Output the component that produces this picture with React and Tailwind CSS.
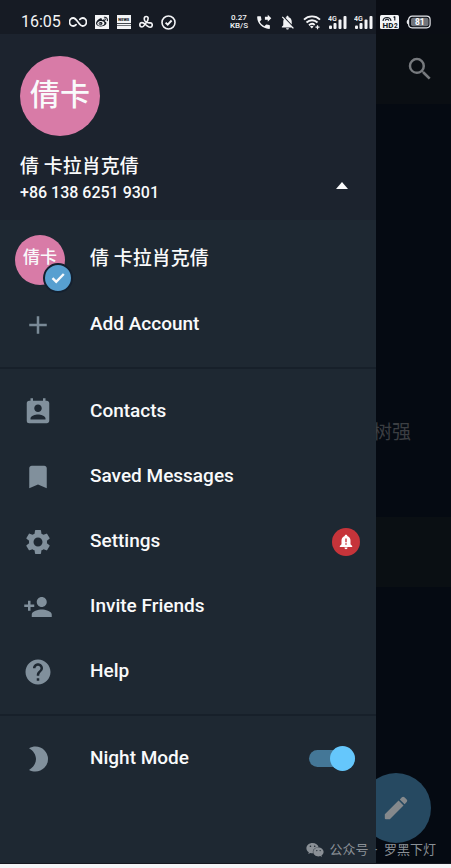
import { useState } from "react";
import {
  MdAdd,
  MdBookmark,
  MdHelp,
  MdNotificationsOff,
  MdPermContactCalendar,
  MdPersonAdd,
  MdPhoneForwarded,
  MdSearch,
  MdSettings,
} from "react-icons/md";
import { FaWeibo, FaWeixin } from "react-icons/fa";

const LINKS = [
  { label: "Contacts", icon: MdPermContactCalendar },
  { label: "Saved Messages", icon: MdBookmark },
  { label: "Settings", icon: MdSettings, alert: true },
  { label: "Invite Friends", icon: MdPersonAdd },
  { label: "Help", icon: MdHelp },
];

function InfinityIcon() {
  return (
    <svg className="h-3 w-[18px]" viewBox="0 0 18 12" fill="none" aria-hidden>
      <path
        d="M11 3.4C12 2.4 13 2 14 2a3.8 3.8 0 0 1 0 8c-4 0-6-8-10-8a3.8 3.8 0 0 0 0 8c1.200 0 2.200-.5 3-1.400"
        transform="translate(.5 0) scale(.94 1)"
        stroke="currentColor"
        strokeWidth="1.800"
        strokeLinecap="round"
      />
    </svg>
  );
}

function NewsIcon() {
  return (
    <span className="flex h-3.5 w-3.5 flex-col items-center bg-gray-100 pt-[3px] text-[#151b24]">
      <span className="text-[4px] leading-[4px] font-black">NEWS</span>
      <span className="mt-px h-px w-full bg-[#151b24]/80" />
      <span className="mt-px h-px w-full bg-[#151b24]/60" />
    </span>
  );
}

function TrefoilIcon() {
  return (
    <svg className="h-3.5 w-3.5" viewBox="0 0 14 14" fill="none" stroke="currentColor" strokeWidth="1.600" aria-hidden>
      <path d="M7.300 7.200C4.500 6 4.600 1.500 7.200 1.500s2.600 3.500 0 6.200C5.500 9.500 5 12 3 12a2.200 2.200 0 0 1 0-4.400c2 0 3 1.500 4.500 2.800 1.200 1 2 1.800 3.500 1.800a2.100 2.100 0 0 0 .2-4.300C9.500 7.800 8.500 8 7.300 7.200z" />
    </svg>
  );
}

function CheckRingIcon() {
  return (
    <svg className="h-[15px] w-[15px]" viewBox="0 0 15 15" fill="none" stroke="currentColor" aria-hidden>
      <circle cx="7.500" cy="7.500" r="6.500" strokeWidth="1.600" />
      <path d="M4.600 7.600l2.100 2.100 3.900-4.200" strokeWidth="1.900" />
    </svg>
  );
}

function WifiIcon() {
  return (
    <svg className="h-4 w-[18px]" viewBox="0 0 18 16" fill="none" stroke="currentColor" strokeWidth="1.900" aria-hidden>
      <path d="M1 5.600c4.500-4.300 11.500-4.300 16 0" />
      <path d="M3.500 8.500c3.200-3 7.800-3 11 0" />
      <path d="M6 11.200c1.800-1.600 4-1.700 5.700-.2" />
      <path d="M7 12.400a2.800 2.800 0 0 1 3.600 0L8.800 14.600z" fill="currentColor" stroke="none" />
      <path d="M12.500 13.200h4M14.500 11.200v4" strokeWidth="1.200" />
    </svg>
  );
}

function SignalIcon() {
  return (
    <svg className="h-[15px] w-[19px]" viewBox="0 0 19 15" fill="currentColor" aria-hidden>
      <text x="0" y="6" fontSize="7" fontWeight="600">4G</text>
      <rect x="1" y="10.500" width="3" height="3.500" rx="1" />
      <rect x="5.500" y="8" width="3" height="6" rx="1" />
      <rect x="10.500" y="4.500" width="3" height="9.500" rx="1" />
      <rect x="15.500" y="1" width="3" height="13" rx="1" />
    </svg>
  );
}

function HdIcon() {
  return (
    <svg className="h-[14px] w-[19px]" viewBox="0 0 19 14" aria-hidden>
      <rect width="19" height="14" rx="1.500" fill="#f3f4f6" />
      <path d="M3 6C3.500 1.300 10.500 1.300 11 6M5.300 5.600c.5-2 3-2 3.500 0M14.800 1.500v4M13.600 2.500l1.200-1" stroke="#151b24" strokeWidth="1.200" fill="none" />
      <text x="2.500" y="12.800" fontSize="8" fontWeight="800" fill="#151b24">HD</text>
      <text x="14" y="12.800" fontSize="6.500" fontWeight="800" fill="#151b24">2</text>
    </svg>
  );
}

function BatteryIcon() {
  return (
    <svg className="h-[14px] w-[25px]" viewBox="0 0 25 14" aria-hidden>
      <path d="M2.200 4.600C.2 5.200.2 8.800 2.200 9.400z" fill="#e5e7eb" />
      <rect x="2.600" y="1.200" width="21.500" height="11.600" rx="3.500" fill="none" stroke="#e5e7eb" strokeWidth="1.200" />
      <rect x="5" y="2.800" width="17.500" height="8.400" rx="2" fill="#70747b" />
      <text x="13.800" y="10" fontSize="8.500" fontWeight="700" textAnchor="middle" fill="#fff">81</text>
    </svg>
  );
}

function MoonIcon({ className }) {
  return (
    <svg className={className} viewBox="0 0 24 24" fill="currentColor" aria-hidden>
      <path d="M4.800 3.300C6.500 2.400 8.200 2 10 2a10 10 0 0 1 0 20c-1.800 0-3.500-.4-5.200-1.300C8.200 18.700 10.400 15.600 10.400 12S8.200 5.300 4.800 3.300z" />
    </svg>
  );
}

function PencilIcon() {
  return (
    <svg className="h-6 w-6" viewBox="0 0 24 24" fill="currentColor" aria-hidden>
      <path d="M.8 18.200L14.600 4.600l4.900 4.900L5.800 23.200H1.800a1 1 0 0 1-1-1z" />
      <path d="M15.800 3.400L17.900 1.300a1.800 1.800 0 0 1 2.500 0l2.300 2.300a1.800 1.800 0 0 1 0 2.500l-2.100 2.200z" />
    </svg>
  );
}

function AlertBadge() {
  return (
    <span className="ml-auto flex h-7 w-7 items-center justify-center rounded-full bg-[#c6343a]">
      <svg className="h-4 w-4" viewBox="0 0 16 16" fill="#fff" aria-hidden>
        <path d="M8 .8c.8 0 1.300.5 1.300 1.200 2 .6 3.200 2.300 3.200 4.500v3.700l1.700 1.700v1H1.800v-1l1.700-1.700V6.500c0-2.200 1.200-3.900 3.200-4.500C6.700 1.300 7.200.8 8 .8zM6.500 13.600h3c0 1-.6 1.600-1.500 1.600s-1.500-.6-1.500-1.600z" />
        <path d="M7.300 4.500h1.400v3.800H7.300zM7.300 9.300h1.400v1.400H7.300z" fill="#c6343a" />
      </svg>
    </span>
  );
}

function StatusBar() {
  return (
    <header className="flex h-[34px] items-center justify-between bg-[linear-gradient(to_right,#161b24_83.33%,#0a0d14_83.33%)] pt-2.5 pr-5 pl-[21px] text-gray-100">
      <div className="flex items-center gap-2">
        <span className="text-base leading-4">16:05</span>
        <InfinityIcon />
        <span className="flex h-3.5 w-3.5 items-center justify-center bg-gray-100 text-[#151b24]">
          <FaWeibo size={12} />
        </span>
        <NewsIcon />
        <TrefoilIcon />
        <CheckRingIcon />
      </div>
      <div className="flex items-center gap-[7px]">
        <div className="text-center text-[8px] leading-[8px] font-medium">
          <p>0.27</p>
          <p>KB/S</p>
        </div>
        <MdPhoneForwarded size={17} />
        <MdNotificationsOff size={17} />
        <WifiIcon />
        <SignalIcon />
        <SignalIcon />
        <HdIcon />
        <BatteryIcon />
      </div>
    </header>
  );
}

function Profile({ open, onToggle }) {
  return (
    <div className="h-[186px] bg-[#1c232e] px-5 pt-[22px]">
      <div className="flex h-20 w-20 items-center justify-center rounded-full bg-[#d87ba7] pb-0.5 text-[30px] leading-none font-medium">
        倩卡
      </div>
      <div className="mt-[17px] flex items-end justify-between">
        <div>
          <p className="text-[19px] leading-7 font-medium">倩 卡拉肖克倩</p>
          <p className="text-base leading-6 font-medium">+86 138 6251 9301</p>
        </div>
        <button
          type="button"
          aria-label="Accounts"
          aria-expanded={open}
          onClick={onToggle}
          className="flex h-10 w-7 items-center justify-center"
        >
          <svg className="h-[7px] w-3" viewBox="0 0 12 7" fill="currentColor" aria-hidden>
            <path d="M6 0l6 7H0z" />
          </svg>
        </button>
      </div>
    </div>
  );
}

function Drawer() {
  const [open, setOpen] = useState(true);
  const [night, setNight] = useState(true);

  return (
    <nav className="w-5/6 bg-[#1e2832] text-gray-50">
      <Profile open={open} onToggle={() => setOpen(!open)} />

      {open && (
        <div className="border-b-2 border-[#17202a] pt-[7px] pb-2.5">
          <button type="button" className="flex h-[65px] w-full items-center pl-[15px]">
            <span className="relative mr-[25px] flex h-[50px] w-[50px] items-center justify-center rounded-full bg-[#d87ba7] pb-1 text-[17px] leading-none font-medium">
              倩卡
              <span className="absolute -right-2 -bottom-2 flex h-[30px] w-[30px] items-center justify-center rounded-full border-2 border-[#14202f] bg-[#579fd0]">
                <svg className="h-3.5 w-3.5" viewBox="0 0 14 14" fill="none" stroke="currentColor" strokeWidth="2.400" aria-hidden>
                  <path d="M1.500 7.200l3.700 3.700L12.800 3" />
                </svg>
              </span>
            </span>
            <span className="text-[19px] font-medium">倩 卡拉肖克倩</span>
          </button>
          <button type="button" className="flex h-[65px] w-full items-center pl-[23px] text-[19px] font-medium">
            <MdAdd size={30} className="mr-[37px] text-[#7a8a97]" />
            Add Account
          </button>
        </div>
      )}

      <ul className="border-b-2 border-[#17202a] pt-2.5 pb-2.5">
        {LINKS.map(({ label, icon: Icon, alert }) => (
          <li key={label}>
            <a href="#" className="flex h-[65px] items-center pr-4 pl-[23px] text-[19px] font-medium">
              <Icon size={30} className="mr-[37px] text-[#81909c]" />
              {label}
              {alert && <AlertBadge />}
            </a>
          </li>
        ))}
      </ul>

      <label className="mt-2.5 flex h-[65px] items-center pr-[21px] pl-[23px] text-[19px] font-medium">
        <MoonIcon className="mr-[37px] h-[30px] w-[30px] text-[#81909c]" />
        Night Mode
        <input
          type="checkbox"
          checked={night}
          onChange={() => setNight(!night)}
          className="relative ml-auto h-[17px] w-[46px] appearance-none rounded-full bg-[#3d4854] before:absolute before:-top-1 before:left-0 before:h-[25px] before:w-[25px] before:rounded-full before:bg-[#9aa5ae] checked:bg-[#447797] checked:before:left-[21px] checked:before:bg-[#65c7fc]"
        />
      </label>
    </nav>
  );
}

// Dimmed chat list that stays visible next to the open drawer
function ChatList() {
  return (
    <main className="relative flex-1 overflow-hidden bg-[#050a12]">
      <div className="flex h-[70px] items-center justify-end bg-[#0a0e13] pr-4">
        <button type="button" aria-label="Search" className="text-[#777a7e]">
          <MdSearch size={30} />
        </button>
      </div>
      <div className="flex h-[413px] items-end justify-end pr-10 pb-[70px] text-[19px] leading-7 whitespace-nowrap text-[#3b3e42]">
        树强
      </div>
      <div className="h-[70px] bg-[#0a0f13]" />
      <button
        type="button"
        aria-label="New message"
        className="absolute right-5 bottom-5 flex h-[70px] w-[70px] items-center justify-center rounded-full bg-[#264961] text-[#85898c]"
      >
        <PencilIcon />
      </button>
    </main>
  );
}

export default function App() {
  return (
    <div className="relative flex min-h-screen flex-col bg-[#050a12] font-['Roboto','Noto_Sans_CJK_SC',sans-serif]">
      <StatusBar />
      <div className="flex flex-1">
        <Drawer />
        <ChatList />
      </div>
      <div className="h-[5px] border-t border-[#14171f] bg-gray-100" />
      <p className="absolute right-[15px] bottom-2 flex items-center gap-1.5 text-[13px] leading-5 text-[#8a9096]">
        <FaWeixin size={18} />
        <span>公众号</span>
        <span>·</span>
        <span>罗黑下灯</span>
      </p>
    </div>
  );
}
